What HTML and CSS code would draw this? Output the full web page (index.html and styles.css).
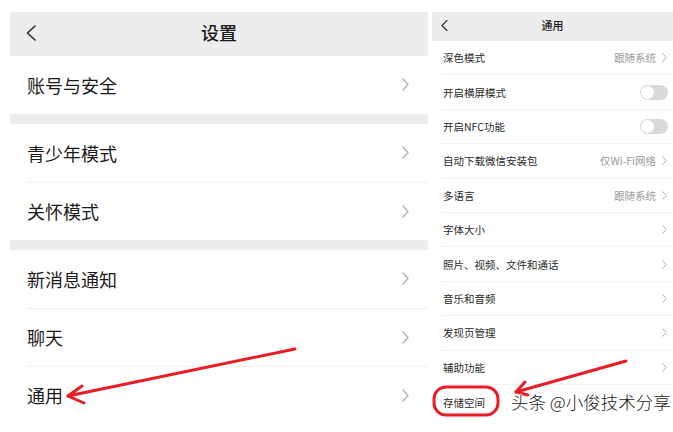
FILE: index.html
```html
<!DOCTYPE html>
<html lang="zh-CN">
<head>
    <meta charset="UTF-8">
    <meta name="viewport" content="width=device-width, initial-scale=1.0">
    <title>设置 / 通用</title>
    <link rel="stylesheet" href="styles.css">
</head>
<body>
    <div class="screens">
        <section class="phone main">
            <header class="bar">
                <svg class="back" width="10" height="16" viewBox="0 0 10 16"><polyline points="9,1 1.5,8 9,15"/></svg>
                <h1>设置</h1>
                <span></span>
            </header>

            <div class="group">
                <div class="row"><span>账号与安全</span><svg class="more" width="7" height="13" viewBox="0 0 7 13"><polyline points="1,1 6,6.5 1,12"/></svg></div>
            </div>

            <div class="group">
                <div class="row"><span>青少年模式</span><svg class="more" width="7" height="13" viewBox="0 0 7 13"><polyline points="1,1 6,6.5 1,12"/></svg></div>
                <div class="row"><span>关怀模式</span><svg class="more" width="7" height="13" viewBox="0 0 7 13"><polyline points="1,1 6,6.5 1,12"/></svg></div>
            </div>

            <div class="group">
                <div class="row"><span>新消息通知</span><svg class="more" width="7" height="13" viewBox="0 0 7 13"><polyline points="1,1 6,6.5 1,12"/></svg></div>
                <div class="row"><span>聊天</span><svg class="more" width="7" height="13" viewBox="0 0 7 13"><polyline points="1,1 6,6.5 1,12"/></svg></div>
                <div class="row"><span>通用</span><svg class="more" width="7" height="13" viewBox="0 0 7 13"><polyline points="1,1 6,6.5 1,12"/></svg></div>
            </div>
        </section>

        <section class="phone general">
            <header class="bar">
                <svg class="back" width="7" height="11" viewBox="0 0 7 11"><polyline points="6,0.5 1,5.5 6,10.5"/></svg>
                <h1>通用</h1>
                <span></span>
            </header>

            <div class="list">
                <div class="item"><span>深色模式</span><span class="value">跟随系统<svg class="more" width="5" height="9" viewBox="0 0 5 9"><polyline points="0.7,0.7 4.3,4.5 0.7,8.3"/></svg></span></div>
                <div class="item"><span>开启横屏模式</span><span class="switch"></span></div>
                <div class="item"><span>开启NFC功能</span><span class="switch"></span></div>
                <div class="item"><span>自动下载微信安装包</span><span class="value">仅Wi-Fi网络<svg class="more" width="5" height="9" viewBox="0 0 5 9"><polyline points="0.7,0.7 4.3,4.5 0.7,8.3"/></svg></span></div>
                <div class="item"><span>多语言</span><span class="value">跟随系统<svg class="more" width="5" height="9" viewBox="0 0 5 9"><polyline points="0.7,0.7 4.3,4.5 0.7,8.3"/></svg></span></div>
                <div class="item"><span>字体大小</span><svg class="more" width="5" height="9" viewBox="0 0 5 9"><polyline points="0.7,0.7 4.3,4.5 0.7,8.3"/></svg></div>
                <div class="item"><span>照片、视频、文件和通话</span><svg class="more" width="5" height="9" viewBox="0 0 5 9"><polyline points="0.7,0.7 4.3,4.5 0.7,8.3"/></svg></div>
                <div class="item"><span>音乐和音频</span><svg class="more" width="5" height="9" viewBox="0 0 5 9"><polyline points="0.7,0.7 4.3,4.5 0.7,8.3"/></svg></div>
                <div class="item"><span>发现页管理</span><svg class="more" width="5" height="9" viewBox="0 0 5 9"><polyline points="0.7,0.7 4.3,4.5 0.7,8.3"/></svg></div>
                <div class="item"><span>辅助功能</span><svg class="more" width="5" height="9" viewBox="0 0 5 9"><polyline points="0.7,0.7 4.3,4.5 0.7,8.3"/></svg></div>
                <div class="item last"><span>存储空间</span></div>
            </div>
        </section>
    </div>

    <!-- red marks drawn over the screenshots -->
    <svg class="marks" width="673" height="432" viewBox="0 0 673 432">
        <polyline points="295,349 68,396"/>
        <polyline points="82,386 68,396 84,403"/>
        <polyline points="626,361 516,392"/>
        <polyline points="525,382 516,392 528,395"/>
        <rect x="434" y="387" width="64" height="28" rx="12" ry="12"/>
    </svg>

    <div class="watermark">头条 @小俊技术分享</div>
</body>
</html>
```

FILE: styles.css
```css
body {
    margin: 0;
    width: 673px;
    height: 432px;
    overflow: hidden;
    position: relative;
    background-color: #fff;
    font-family: "Noto Sans CJK SC", "Noto Sans", sans-serif;
    color: #1b1b1b;
}

.screens {
    display: flex;
    gap: 4px;
    padding: 12px 0 0 10px;
}

.phone {
    background-color: #fff;
}

.main {
    width: 418px;
}

.general {
    width: 241px;
}

.bar {
    display: grid;
    align-items: center;
    box-sizing: border-box;
    background-color: #ededed;
}

.bar h1 {
    margin: 0;
    text-align: center;
    font-weight: 500;
}

.back polyline,
.more polyline {
    fill: none;
    stroke-linecap: round;
    stroke-linejoin: round;
}

.back polyline {
    stroke: #333;
}

.more polyline {
    stroke: #b2b2b2;
}

/* left screen */
.main .bar {
    height: 44px;
    padding-bottom: 5px;
    grid-template-columns: 60px 1fr 60px;
}

.main .bar h1 {
    font-size: 18px;
}

.main .back {
    margin-left: 16px;
    margin-top: 2px;
}

.main .back polyline {
    stroke-width: 1.7;
}

.main .more polyline {
    stroke-width: 1.3;
}

.group {
    padding-left: 17px;
    border-bottom: 10px solid #ededed;
}

.group:last-child {
    border-bottom: 0;
}

.row {
    display: flex;
    align-items: center;
    justify-content: space-between;
    height: 58px;
    box-sizing: border-box;
    padding: 0 19px 1px 0;
    font-size: 18px;
}

.row + .row {
    border-top: 1px solid #efefef;
}

/* right screen */
.general .bar {
    height: 29px;
    padding-bottom: 3px;
    grid-template-columns: 40px 1fr 40px;
}

.general .bar h1 {
    font-size: 11px;
}

.general .back {
    margin-left: 9px;
    margin-top: 1px;
}

.general .back polyline {
    stroke-width: 1.2;
}

.general .more polyline {
    stroke-width: 1;
}

.list {
    padding-left: 10px;
}

.item {
    display: flex;
    align-items: center;
    justify-content: space-between;
    height: 34.4px;
    box-sizing: border-box;
    padding: 0 6px 0 1px;
    border-bottom: 1px solid #f1f1f1;
    font-size: 10.5px;
    color: #2a2a2a;
}

.item.last {
    border-bottom: 0;
}

.value {
    display: flex;
    align-items: center;
    gap: 6px;
    color: #9a9a9a;
}

.switch {
    position: relative;
    width: 28px;
    height: 15px;
    border-radius: 8px;
    background-color: #d9d9d9;
    margin-right: -1px;
}

.switch::after {
    content: "";
    position: absolute;
    left: 1px;
    top: 1px;
    width: 13px;
    height: 13px;
    border-radius: 50%;
    background-color: #fff;
}

/* annotations */
.marks {
    position: absolute;
    left: 0;
    top: 0;
}

.marks polyline,
.marks rect {
    fill: none;
    stroke: #ec1c24;
    stroke-width: 3;
    stroke-linecap: round;
    stroke-linejoin: round;
}

.watermark {
    position: absolute;
    left: 511px;
    top: 389px;
    font-size: 17.5px;
    font-weight: 300;
    color: #1a1a1a;
    white-space: nowrap;
    text-shadow: 1px 0 #fff, -1px 0 #fff, 0 1px #fff, 0 -1px #fff;
}
```
